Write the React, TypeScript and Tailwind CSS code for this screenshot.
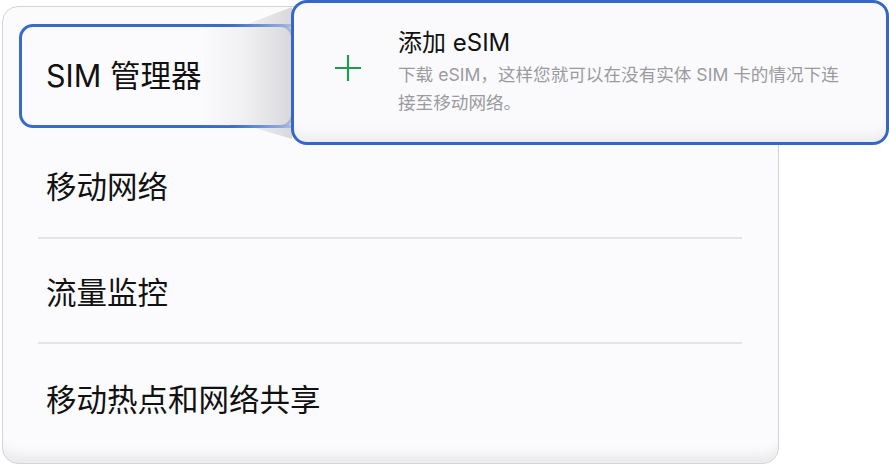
const font = "font-['Inter','Noto_Sans_CJK_SC',sans-serif]";

function PlusIcon() {
  return (
    <svg width="28" height="28" viewBox="0 0 28 28" fill="none">
      <path d="M14 1v26M1 14h26" stroke="#1f9d4f" strokeWidth="2.2" />
    </svg>
  );
}

function Wedge() {
  return (
    <svg
      className="absolute left-[200px] top-0 pointer-events-none"
      width="92"
      height="145"
      viewBox="200 0 92 145"
    >
      <defs>
        <linearGradient id="wedgeFill" x1="200" y1="0" x2="292" y2="0" gradientUnits="userSpaceOnUse">
          <stop offset="0" stopColor="#d4d4d8" stopOpacity="0" />
          <stop offset="0.45" stopColor="#d4d4d8" stopOpacity="0.25" />
          <stop offset="1" stopColor="#cfcfd3" stopOpacity="0.8" />
        </linearGradient>
        <linearGradient id="wedgeLine" x1="230" y1="0" x2="292" y2="0" gradientUnits="userSpaceOnUse">
          <stop offset="0" stopColor="#3a6bc9" stopOpacity="1" />
          <stop offset="1" stopColor="#9db4e2" stopOpacity="0.8" />
        </linearGradient>
      </defs>
      <polygon points="200,27 240,27 292,7 292,139 248,126 200,126" fill="url(#wedgeFill)" />
      <path d="M230 25.5H292" stroke="url(#wedgeLine)" strokeWidth="3" />
      <path d="M230 126.5H292" stroke="url(#wedgeLine)" strokeWidth="3" />
    </svg>
  );
}

export default function App() {
  return (
    <div className={`relative w-[890px] h-[466px] bg-white overflow-hidden pt-[6px] pl-[2px] ${font}`}>
      <div className="w-[777px] h-[458px] rounded-[16px] border border-[#d4d4d6] bg-[#fbfbfd] shadow-[inset_0_-16px_12px_-8px_rgba(0,0,0,0.07)] flex flex-col">
        <div className="ml-[16px] mt-[17px] w-[275px] h-[104px] rounded-[14px] border-[3px] border-[#3a6bc9] bg-[#fbfbfd] flex items-center pl-[24px] text-[30.5px] leading-[40px] text-[#111]">
          SIM 管理器
        </div>
        <div className="ml-[43px] mt-[39px] mb-[30px] text-[30.5px] leading-[40px] text-[#111]">移动网络</div>
        <div className="ml-[35px] w-[704px] h-[2px] bg-[#e4e4e7]" />
        <div className="ml-[43px] mt-[34px] mb-[29px] text-[30.5px] leading-[40px] text-[#111]">流量监控</div>
        <div className="ml-[35px] w-[704px] h-[2px] bg-[#e4e4e7]" />
        <div className="ml-[43px] mt-[36px] text-[30.5px] leading-[40px] text-[#111]">移动热点和网络共享</div>
      </div>

      <Wedge />

      <div className="absolute left-[291px] top-0 w-[598px] h-[145px] rounded-[16px] border-[3px] border-[#3567c6] bg-[#fafafc] shadow-[inset_0_-16px_14px_-10px_rgba(0,0,0,0.06)] flex items-start">
        <div className="ml-[40px] mt-[51px]">
          <PlusIcon />
        </div>
        <div className="ml-[36px] mt-[24px] flex flex-col">
          <div className="text-[24px] leading-[32px] text-[#111]">添加 eSIM</div>
          <div className="mt-[2px] text-[17.6px] leading-[28px] text-[#9b9b9e]">
            下载 eSIM，这样您就可以在没有实体 SIM 卡的情况下连
            <br />
            接至移动网络。
          </div>
        </div>
      </div>
    </div>
  );
}
